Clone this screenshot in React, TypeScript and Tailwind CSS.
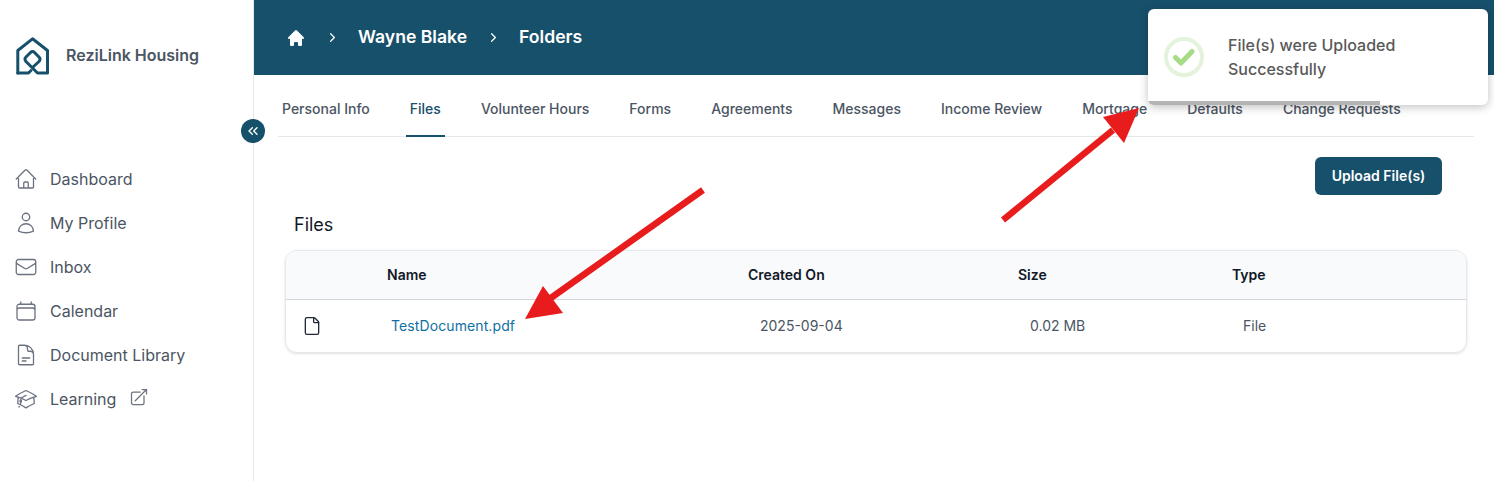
import React from 'react';
import { ChevronRight, ChevronsLeft, File } from 'lucide-react';
import { HiHome } from 'react-icons/hi';
import {
  HiOutlineHome,
  HiOutlineUser,
  HiOutlineEnvelope,
  HiOutlineCalendar,
  HiOutlineDocumentText,
  HiOutlineAcademicCap,
  HiOutlineArrowTopRightOnSquare,
} from 'react-icons/hi2';

const navItems = [
  { label: 'Dashboard', icon: HiOutlineHome },
  { label: 'My Profile', icon: HiOutlineUser },
  { label: 'Inbox', icon: HiOutlineEnvelope },
  { label: 'Calendar', icon: HiOutlineCalendar },
  { label: 'Document Library', icon: HiOutlineDocumentText },
  { label: 'Learning', icon: HiOutlineAcademicCap },
];

const tabs = [
  'Personal Info',
  'Files',
  'Volunteer Hours',
  'Forms',
  'Agreements',
  'Messages',
  'Income Review',
  'Mortgage',
  'Defaults',
  'Change Requests',
];

const Logo = () => (
  <svg width="34" height="38" viewBox="0 0 34 38" fill="none" stroke="#17506b" strokeWidth="3" strokeLinejoin="round" strokeLinecap="round">
    <path d="M1.8 36H12.5L15 33.5" />
    <path d="M1.8 36V13.5L16.5 1.8L31.5 13.5V36H21.5L10 24.5Q8 22 10 20L14.5 15.5Q16.5 13.5 18.5 15.5L23 20Q25 22 23 24.5L17 30" />
  </svg>
);

const App: React.FC = () => {
  return (
    <div className="relative flex h-[481px] w-[1494px] overflow-hidden bg-white font-['Inter',sans-serif]">
      {/* Sidebar */}
      <aside className="w-[254px] shrink-0 border-r border-gray-200">
        <div className="flex h-[75px] items-end pl-[16px]">
          <div className="flex items-center gap-[16px]">
            <Logo />
            <span className="pb-[2px] text-[16px] font-semibold text-[#4b5563]">ReziLink Housing</span>
          </div>
        </div>
        <nav className="mt-[89px] flex flex-col gap-[14px] pl-[14px]">
          {navItems.map((item) => (
            <div key={item.label} className="flex h-[30px] items-center gap-[12px] text-[#4b5563]">
              <item.icon className="h-[24px] w-[24px] stroke-[1.3] text-[#6b7280]" />
              <span className="text-[16px] leading-none">{item.label}</span>
              {item.label === 'Learning' && (
                <HiOutlineArrowTopRightOnSquare className="ml-[1px] h-[20px] w-[20px] -translate-y-[2px] text-[#6b7280]" />
              )}
            </div>
          ))}
        </nav>
      </aside>

      {/* Main */}
      <main className="min-w-0 flex-1">
        <header className="flex h-[75px] items-center bg-[#17506b] pl-[32px] text-white">
          <HiHome className="h-[20px] w-[20px]" />
          <ChevronRight className="ml-[19px] h-[15px] w-[15px]" />
          <span className="ml-[18px] text-[17.6px] font-semibold">Wayne Blake</span>
          <ChevronRight className="ml-[19px] h-[15px] w-[15px]" />
          <span className="ml-[18px] text-[17.6px] font-semibold">Folders</span>
        </header>

        <div className="ml-[24px] mr-[20px] flex h-[62px] items-stretch gap-[32px] border-b border-gray-200">
          {tabs.map((tab) => (
            <div
              key={tab}
              className={
                tab === 'Files'
                  ? '-mb-px flex items-center border-b-2 border-[#17506b] px-[4px] pt-[6px] text-[14px] font-medium text-[#17506b]'
                  : 'flex items-center px-[4px] pt-[6px] text-[14px] font-medium text-[#4b5563]'
              }
            >
              {tab}
            </div>
          ))}
        </div>

        <div className="flex justify-end pr-[52px] pt-[20px]">
          <button className="h-[38px] w-[127px] rounded-md bg-[#17506b] pb-[2px] text-[14px] font-semibold text-white">
            Upload File(s)
          </button>
        </div>

        <h2 className="ml-[40px] mt-[19px] text-[18px] leading-[22px] text-[#111827]">Files</h2>

        <div className="ml-[31px] mr-[27px] mt-[14px] overflow-hidden rounded-xl border border-gray-200 shadow-sm">
          <div className="grid h-[49px] grid-cols-[101px_361px_270px_214px_1fr] items-center border-b border-gray-300 bg-[#f9fafb] pb-[2px] text-[14px] font-semibold text-[#111827]">
            <span />
            <span>Name</span>
            <span>Created On</span>
            <span>Size</span>
            <span>Type</span>
          </div>
          <div className="grid h-[52px] grid-cols-[101px_361px_270px_214px_1fr] items-center pb-[2px] text-[14px] text-[#4b5563]">
            <span className="pl-[16px] pt-[2px]">
              <File className="h-[20px] w-[20px] stroke-[1.6] text-[#1f2937]" />
            </span>
            <span className="pl-[4px] tracking-[0.1px] text-[#0f6fa3]">TestDocument.pdf</span>
            <span className="pl-[12px]">2025-09-04</span>
            <span className="pl-[12px]">0.02 MB</span>
            <span className="pl-[11px]">File</span>
          </div>
        </div>
      </main>

      {/* Sidebar collapse button */}
      <button className="absolute left-[241px] top-[119px] flex h-[24px] w-[24px] items-center justify-center rounded-full bg-[#17506b] text-white">
        <ChevronsLeft className="h-[16px] w-[16px]" />
      </button>

      {/* Toast */}
      <div className="absolute left-[1148px] top-[9px] flex h-[96px] w-[340px] overflow-hidden rounded-md bg-white shadow-[0_2px_10px_rgba(0,0,0,0.25)]">
        <div className="flex items-center pl-[16px]">
          <div className="flex h-[40px] w-[40px] items-center justify-center rounded-full border-[4px] border-[#e4f3dc]">
            <svg width="24" height="20" viewBox="0 0 24 20" fill="none" stroke="#a5dc86" strokeWidth="5" strokeLinecap="round" strokeLinejoin="round">
              <path d="M3.5 10.5L9 16L20 4.5" />
            </svg>
          </div>
        </div>
        <p className="ml-[24px] self-center text-[16px] leading-[24px] font-medium text-[#595959]">
          File(s) were Uploaded
          <br />
          Successfully
        </p>
        <div className="absolute bottom-0 left-0 h-[4px] w-[232px] bg-[#b3b3b3]" />
      </div>

      {/* Annotation arrows */}
      <svg className="pointer-events-none absolute left-0 top-0" width="1494" height="481" fill="#e81c1c">
        <path d="M1003 220L1113 130" stroke="#e81c1c" strokeWidth="6.5" />
        <path d="M1139 108L1103 117L1124 143Z" />
        <path d="M703 190L548 300" stroke="#e81c1c" strokeWidth="6.5" />
        <path d="M525 319L543 286L563 313Z" />
      </svg>
    </div>
  );
};

export default App;
